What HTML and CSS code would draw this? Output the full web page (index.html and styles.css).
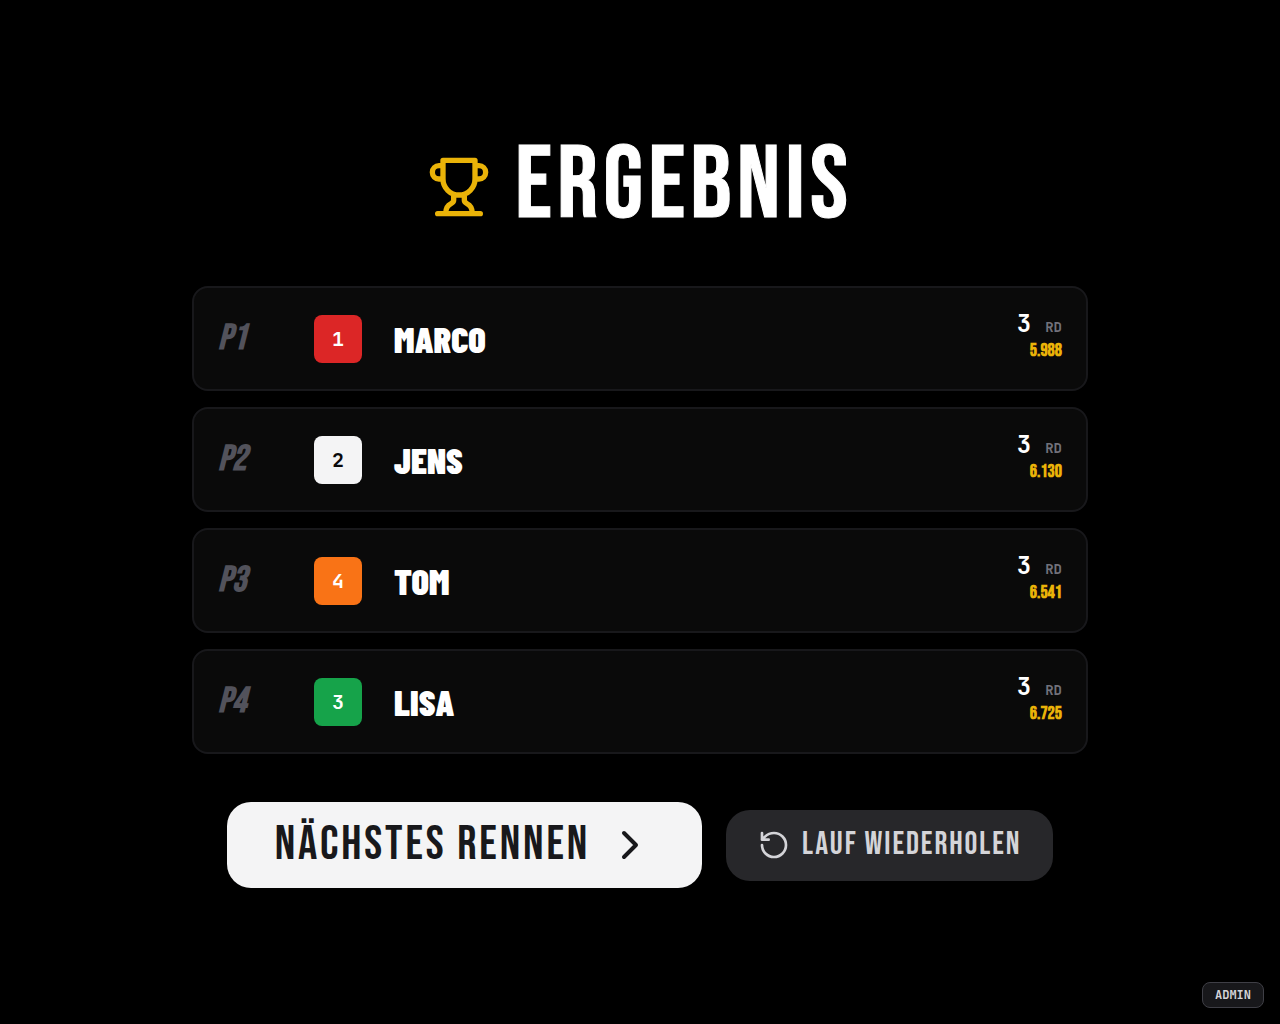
FILE: index.html
```html
<!DOCTYPE html>
<html lang="de">
<head>
<meta charset="utf-8">
<meta name="viewport" content="width=device-width, initial-scale=1">
<title>Ergebnis</title>
<link rel="stylesheet" href="styles.css">
</head>
<body>
<main class="results">
  <h1 class="title">
    <svg class="trophy" viewBox="0 0 24 24" aria-hidden="true"><path d="M6 9H4.5a2.5 2.5 0 0 1 0-5H6M18 9h1.5a2.5 2.5 0 0 0 0-5H18M4 22h16M10 14.66V17c0 .55-.47.98-.97 1.21C7.85 18.75 7 20.24 7 22M14 14.66V17c0 .55.47.98.97 1.21C16.15 18.75 17 20.24 17 22M18 2H6v7a6 6 0 0 0 12 0V2Z"/></svg>
    <span>ERGEBNIS</span>
  </h1>
  <ol class="ranking">
    <li class="row">
      <span class="place">P1</span><span class="badge red">1</span><span class="name">MARCO</span>
      <div class="score"><div class="laps"><span class="count">3</span><span class="unit">RD</span></div><div class="time">5.988</div></div>
    </li>
    <li class="row">
      <span class="place">P2</span><span class="badge white">2</span><span class="name">JENS</span>
      <div class="score"><div class="laps"><span class="count">3</span><span class="unit">RD</span></div><div class="time">6.130</div></div>
    </li>
    <li class="row">
      <span class="place">P3</span><span class="badge orange">4</span><span class="name">TOM</span>
      <div class="score"><div class="laps"><span class="count">3</span><span class="unit">RD</span></div><div class="time">6.541</div></div>
    </li>
    <li class="row">
      <span class="place">P4</span><span class="badge green">3</span><span class="name">LISA</span>
      <div class="score"><div class="laps"><span class="count">3</span><span class="unit">RD</span></div><div class="time">6.725</div></div>
    </li>
  </ol>
  <div class="actions">
    <button class="next" type="button"><span>NÄCHSTES RENNEN</span><svg class="chevron" viewBox="0 0 24 24" aria-hidden="true"><path d="m9 18 6-6-6-6"/></svg></button>
    <button class="repeat" type="button"><svg class="rotate" viewBox="0 0 24 24" aria-hidden="true"><path d="M3 12a9 9 0 1 0 9-9 9.75 9.75 0 0 0-6.74 2.74L3 8M3 3v5h5"/></svg><span>LAUF WIEDERHOLEN</span></button>
  </div>
</main>
<button class="admin" type="button">ADMIN</button>
</body>
</html>
```
FILE: styles.css
```css
* { box-sizing: border-box; }
:root {
  --display: "Bebas Neue", "Liberation Sans Narrow", "Liberation Sans", sans-serif;
  --heavy: "Barlow Condensed", "Liberation Sans Narrow", "Liberation Sans", sans-serif;
  --mono: "JetBrains Mono", "DejaVu Sans Mono", monospace;
}
body { margin: 0; background: #000; color: #fff; font-family: var(--display); }
button { border: 0; font: inherit; cursor: pointer; }
svg { flex: none; fill: none; stroke: currentColor; stroke-width: 2; stroke-linecap: round; stroke-linejoin: round; }
.results {
  min-height: 100vh; max-width: 944px; margin: 0 auto; padding: 24px;
  display: flex; flex-direction: column; justify-content: center; gap: 48px;
}
.title {
  margin: 0; display: flex; align-items: center; justify-content: center; gap: 24px;
  font-size: 102px; line-height: 102px; font-weight: 400; letter-spacing: 0.05em;
  -webkit-text-stroke: 1px #fff;
}
.trophy { width: 64px; height: 64px; color: #eab308; }
.ranking { list-style: none; margin: 0; padding: 0; display: grid; gap: 16px; }
.row {
  display: grid; grid-template-columns: 64px 48px 1fr auto; align-items: center; gap: 32px;
  min-height: 105px; padding: 20px 24px; border: 2px solid #18181b; border-radius: 16px; background: #0a0a0a;
}
.place { font-size: 36px; line-height: 40px; font-style: italic; font-weight: 700; color: #52525b; }
.badge {
  display: grid; place-items: center; height: 48px; border-radius: 8px;
  font: 700 20px/28px var(--mono);
}
.red { background: #dc2626; }
.white { background: #f4f4f5; color: #09090b; }
.orange { background: #f97316; }
.green { background: #16a34a; }
.name { font: 900 36px/40px var(--heavy); }
.score { text-align: right; }
.laps { display: flex; justify-content: flex-end; align-items: baseline; gap: 14px; font: 700 24px/32px var(--mono); }
.unit { font-size: 14px; color: #71717a; }
.time { padding-bottom: 10px; font-size: 18px; line-height: 16px; font-weight: 700; color: #eab308; }
.actions { display: flex; flex-wrap: wrap; align-items: center; justify-content: center; gap: 24px; }
.next, .repeat { display: flex; align-items: center; border-radius: 24px; letter-spacing: 0.06em; }
.next { gap: 16px; min-height: 86px; padding: 16px 48px; background: #f4f4f5; color: #18181b; font-size: 48px; line-height: 48px; }
.chevron { width: 48px; height: 48px; }
.repeat { gap: 12px; min-height: 71px; padding: 16px 32px; background: #27272a; color: #d4d4d8; font-size: 32px; line-height: 32px; }
.rotate { width: 32px; height: 32px; }
.admin {
  position: fixed; right: 16px; bottom: 16px; padding: 4px 12px;
  border: 1px solid #3f3f46; border-radius: 8px; background: #18181b; color: #d4d4d8;
  font: 700 12px/16px var(--mono);
}
```
